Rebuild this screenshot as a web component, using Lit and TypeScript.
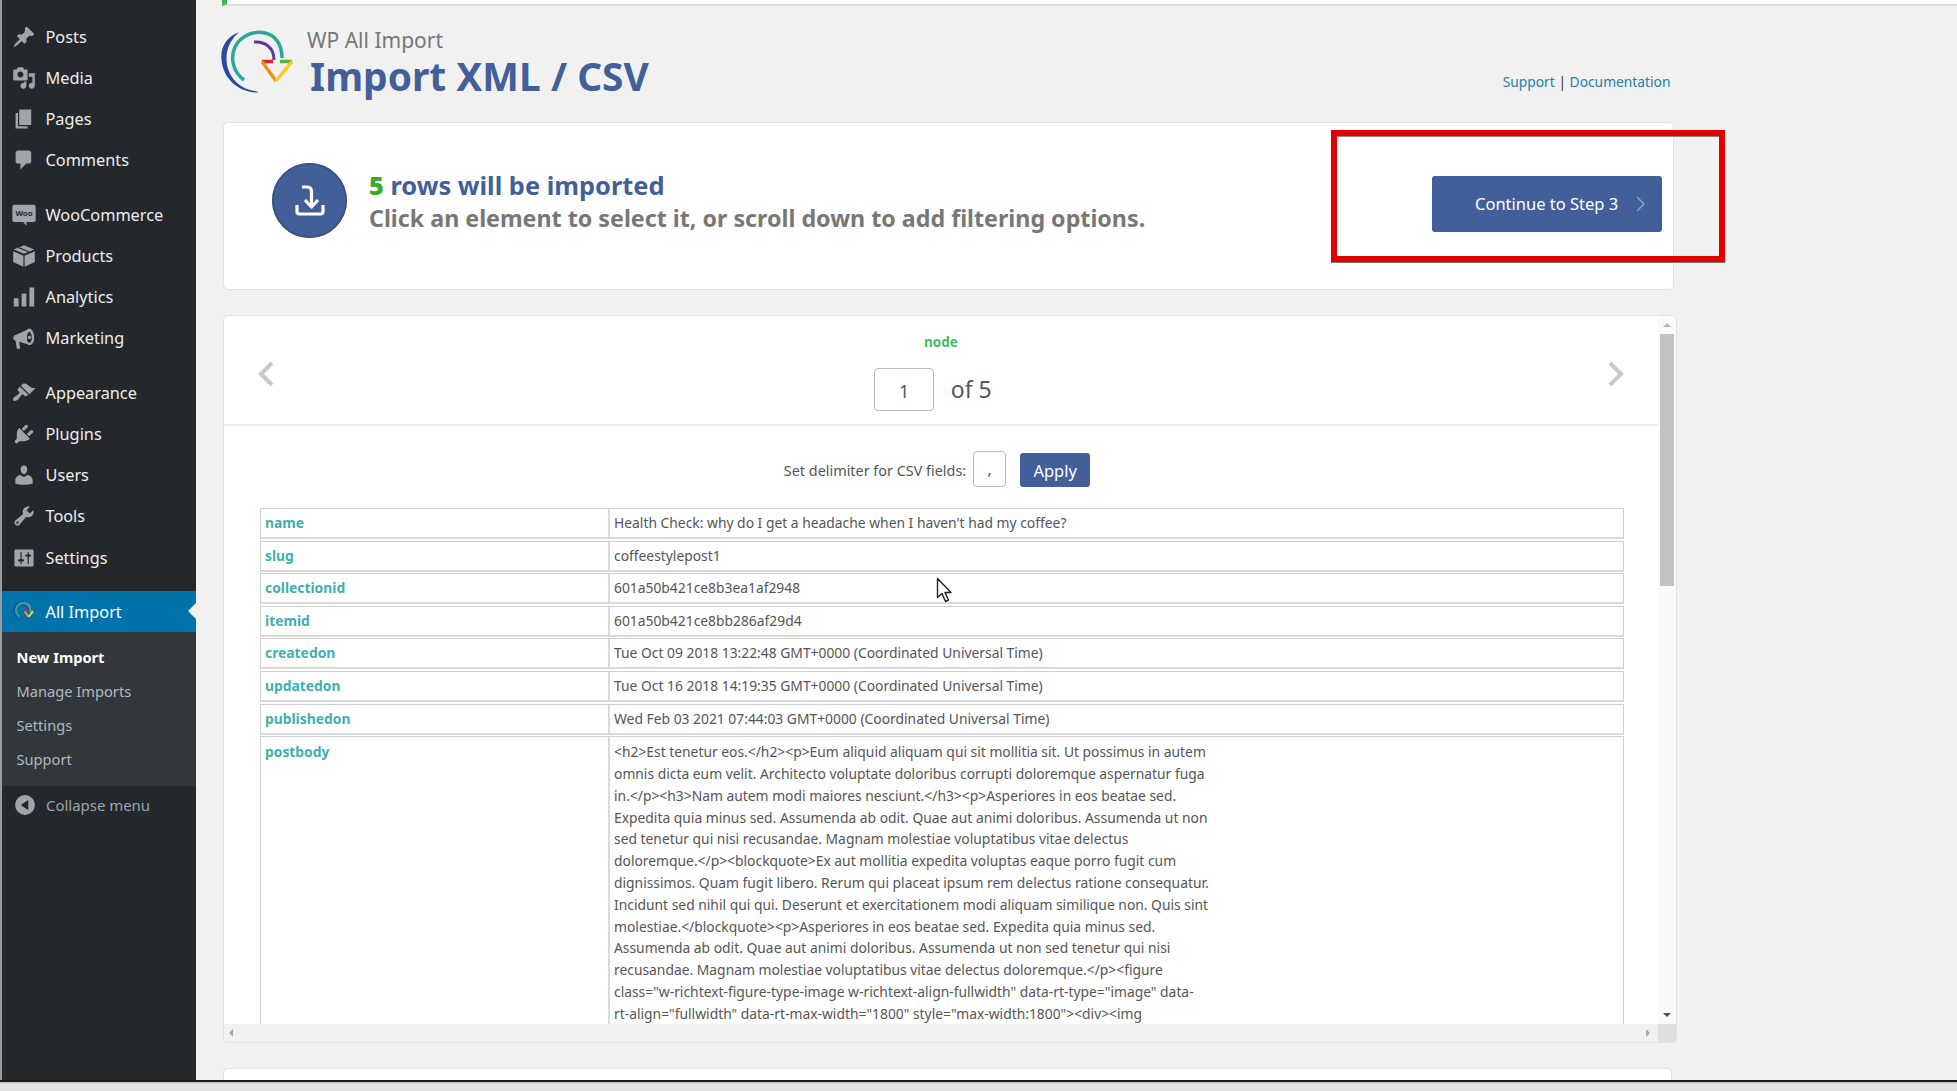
import { LitElement, html, css, svg } from "lit";
import { customElement } from "lit/decorators.js";

const ICONS: Record<string, unknown> = {
  pin: svg`<path d="M10.44 3.02l1.82-1.82 6.36 6.35-1.83 1.82c-1.05-.68-2.48-.57-3.41.36l-.75.75c-.92.93-1.04 2.35-.35 3.41l-1.83 1.82-2.41-2.41-2.8 2.79c-.42.42-3.38 2.71-3.8 2.29s1.86-3.39 2.28-3.81l2.79-2.79L4.1 9.36l1.83-1.82c1.05.69 2.48.57 3.4-.36l.75-.75c.93-.92 1.05-2.35.36-3.41z"/>`,
  media: svg`<path fill-rule="evenodd" d="M13 11V4c0-.55-.45-1-1-1h-1.67L9 1H5L3.67 3H2c-.55 0-1 .45-1 1v7c0 .55.45 1 1 1h10c.55 0 1-.45 1-1zM7 4.500c1.380 0 2.500 1.120 2.500 2.500S8.380 9.500 7 9.500 4.500 8.380 4.500 7 5.620 4.500 7 4.500zM14 6h5v10.500c0 1.380-1.120 2.500-2.500 2.500S14 17.880 14 16.500s1.120-2.500 2.500-2.500c.17 0 .34.02.5.05V9h-3V6zm-4 8.050V13h2v3.500c0 1.380-1.120 2.500-2.500 2.500S7 17.880 7 16.500 8.120 14 9.500 14c.17 0 .34.02.5.05z"/>`,
  page: svg`<path d="M6 15V2h10v13H6zm-1 1h8v2H3V5h2v11z"/>`,
  comment: svg`<path d="M5 2h9c1.100 0 2 .9 2 2v7c0 1.100-.9 2-2 2h-2l-5 5v-5H5c-1.100 0-2-.9-2-2V4c0-1.100.9-2 2-2z"/>`,
  woo: svg`<path d="M2 1.500h16c.9 0 1.700.8 1.700 1.700v11c0 .9-.8 1.700-1.700 1.700h-6l.4 3-3.200-3H2c-.9 0-1.700-.8-1.700-1.700v-11c0-.9.8-1.700 1.700-1.700z"/><text x="10" y="11.200" text-anchor="middle" font-size="6.500" font-weight="700" fill="#23282d" font-family="Noto Sans, sans-serif">Woo</text>`,
  box: svg`<path d="M10 1l8.500 3.500-8.500 3.700L1.500 4.500zM1 6l8.500 3.700V19L1 15zM19 6v9l-8.500 4V9.700z"/><path d="M5.500 3l8.500 3.500" stroke="#23282d" stroke-width="1" fill="none"/>`,
  bars: svg`<path d="M1.500 11h4v7h-4zM8 7h4v11H8zM14.500 2h4v16h-4z"/>`,
  mega: svg`<path fill-rule="evenodd" d="M18.500 10c0 3.400-1.800 6-4 6-.8 0-1.500-.3-2.100-.9L6 13.200 6.800 19H4l-1-6.800C1.700 11.800 1 11 1 10c0-1.300 1-2.200 2.500-2.700l9-4.200c.6-.7 1.300-1.100 2-1.100 2.200 0 4 3.600 4 8zm-4-5c-1.200 0-2 2.200-2 5s.8 4 2 4 2-1.800 2-4-.8-5-2-5z"/><circle cx="14.500" cy="9.500" r="1.400"/>`,
  brush: svg`<path d="M14.480 11.060L7.410 3.990l1.500-1.500c.5-.56 2.300-.47 3.510.32 1.210.8 1.430 1.280 2.910 2.100 1.180.64 2.450 1.260 4.450.85zm-.71.71L6.700 4.700 4.930 6.470c-.39.39-.39 1.020 0 1.410l1.060 1.060c.39.39.39 1.030 0 1.420-.6.6-1.430 1.110-2.210 1.690-.35.26-.7.53-1.010.84C1.430 13.230.5 15.070 1 16.500c1.430.5 3.270-.43 4.610-1.770.31-.31.58-.66.84-1.010.58-.78 1.090-1.610 1.690-2.210.39-.39 1.030-.39 1.420 0l1.060 1.060c.39.39 1.020.39 1.410 0z"/>`,
  plug: svg`<path d="M13.110 4.360L9.870 7.600 8 5.730l3.240-3.240c.35-.34 1.050-.2 1.560.32.52.51.66 1.210.31 1.550zm-8 1.770l.91-1.120 9.010 9.010-1.190.84c-.71.71-2.630 1.160-3.820 1.160H6.140L4.900 17.260c-.59.59-1.540.59-2.120 0-.59-.58-.59-1.530 0-2.120l1.240-1.240v-3.880c0-1.130.4-3.190 1.090-3.890zm7.260 3.970l3.240-3.240c.34-.35 1.040-.21 1.550.31.52.51.66 1.210.31 1.550l-3.240 3.250z"/>`,
  user: svg`<path d="M10 9.250c-2.270 0-2.730-3.440-2.730-3.440C7 4.020 7.820 2 9.970 2c2.160 0 2.980 2.020 2.710 3.810 0 0-.41 3.440-2.680 3.440zm0 2.570L12.720 10c2.390 0 4.520 2.330 4.520 4.530v2.490s-3.650 1.130-7.240 1.130c-3.650 0-7.240-1.130-7.240-1.130v-2.490c0-2.250 1.940-4.480 4.470-4.480z"/>`,
  wrench: svg`<path fill-rule="evenodd" d="M16.680 9.770c-1.340 1.340-3.300 1.670-4.950.99l-5.410 6.520c-.99.99-2.590.99-3.580 0s-.99-2.590 0-3.570l6.520-5.420c-.68-1.650-.35-3.610.99-4.950 1.280-1.280 3.120-1.620 4.720-1.060l-2.890 2.890 2.820 2.820 2.860-2.870c.53 1.580.18 3.390-1.080 4.650zM3.810 16.210c.4.39 1.040.39 1.430 0 .4-.4.4-1.040 0-1.430-.39-.4-1.030-.4-1.430 0-.39.39-.39 1.030 0 1.430z"/>`,
  sliders: svg`<path fill-rule="evenodd" d="M18 16V4c0-.55-.45-1-1-1H3c-.55 0-1 .45-1 1v12c0 .55.45 1 1 1h14c.55 0 1-.45 1-1zM8 11h1c.55 0 1 .45 1 1s-.45 1-1 1H8v1.500c0 .28-.22.5-.5.5s-.5-.22-.5-.5V13H6c-.55 0-1-.45-1-1s.45-1 1-1h1V5.500c0-.28.22-.5.5-.5s.5.22.5.5V11zm5-2h-1c-.55 0-1-.45-1-1s.45-1 1-1h1V5.500c0-.28.22-.5.5-.5s.5.22.5.5V7h1c.55 0 1 .45 1 1s-.45 1-1 1h-1v5.500c0 .28-.22.5-.5.5s-.5-.22-.5-.5V9z"/>`,
  collapse: svg`<path fill-rule="evenodd" d="M10 1a9 9 0 1 0 0 18 9 9 0 0 0 0-18zm3 4.500v9L6 10z"/>`,
};

const logo = (w: number, h: number, cls = "") => html`<svg class=${cls} width=${w} height=${h} viewBox="0 0 84 72" fill="none">
  <path d="M21 6C8 11 2 22 3.500 34 5 52 20 67 41 66.500 38 65 37 65 32 64 18 60 9 48 8.500 34 8 24 12 14 21 6z" fill="#2c4a9c"/>
  <path d="M26 54C15 46 12 32 17 21 23 9 36 4.500 47 7c10 2 17 11 17 25" stroke="#2aa99b" stroke-width="3.500"/>
  <path d="M36 16c10-1 20 5 20 18" stroke="#5a3a9e" stroke-width="3"/>
  <path d="M44 35.500h11" stroke="#d8262c" stroke-width="3.500"/>
  <path d="M62 35.500h12" stroke="#5cb53a" stroke-width="3.500"/>
  <path d="M44 35.500L58 55" stroke="#e8932a" stroke-width="3.500"/>
  <path d="M74 35.500L58 55" stroke="#f6cc1e" stroke-width="3.500"/>
</svg>`;

const GROUPS: { icon: string; label: string }[][] = [
  [
    { icon: "pin", label: "Posts" },
    { icon: "media", label: "Media" },
    { icon: "page", label: "Pages" },
    { icon: "comment", label: "Comments" },
  ],
  [
    { icon: "woo", label: "WooCommerce" },
    { icon: "box", label: "Products" },
    { icon: "bars", label: "Analytics" },
    { icon: "mega", label: "Marketing" },
  ],
  [
    { icon: "brush", label: "Appearance" },
    { icon: "plug", label: "Plugins" },
    { icon: "user", label: "Users" },
    { icon: "wrench", label: "Tools" },
    { icon: "sliders", label: "Settings" },
  ],
];

const ROWS = [
  ["name", "Health Check: why do I get a headache when I haven't had my coffee?"],
  ["slug", "coffeestylepost1"],
  ["collectionid", "601a50b421ce8b3ea1af2948"],
  ["itemid", "601a50b421ce8bb286af29d4"],
  ["createdon", "Tue Oct 09 2018 13:22:48 GMT+0000 (Coordinated Universal Time)"],
  ["updatedon", "Tue Oct 16 2018 14:19:35 GMT+0000 (Coordinated Universal Time)"],
  ["publishedon", "Wed Feb 03 2021 07:44:03 GMT+0000 (Coordinated Universal Time)"],
];

const BODY = [
  "<h2>Est tenetur eos.</h2><p>Eum aliquid aliquam qui sit mollitia sit. Ut possimus in autem",
  "omnis dicta eum velit. Architecto voluptate doloribus corrupti doloremque aspernatur fuga",
  "in.</p><h3>Nam autem modi maiores nesciunt.</h3><p>Asperiores in eos beatae sed.",
  "Expedita quia minus sed. Assumenda ab odit. Quae aut animi doloribus. Assumenda ut non",
  "sed tenetur qui nisi recusandae. Magnam molestiae voluptatibus vitae delectus",
  "doloremque.</p><blockquote>Ex aut mollitia expedita voluptas eaque porro fugit cum",
  "dignissimos. Quam fugit libero. Rerum qui placeat ipsum rem delectus ratione consequatur.",
  "Incidunt sed nihil qui qui. Deserunt et exercitationem modi aliquam similique non. Quis sint",
  "molestiae.</blockquote><p>Asperiores in eos beatae sed. Expedita quia minus sed.",
  "Assumenda ab odit. Quae aut animi doloribus. Assumenda ut non sed tenetur qui nisi",
  "recusandae. Magnam molestiae voluptatibus vitae delectus doloremque.</p><figure",
  'class="w-richtext-figure-type-image w-richtext-align-fullwidth" data-rt-type="image" data-',
  'rt-align="fullwidth" data-rt-max-width="1800" style="max-width:1800"><div><img',
];

@customElement("app-root")
export class AppRoot extends LitElement {
  static styles = css`
    :host {
      display: block;
      position: relative;
      width: 1957px;
      height: 1091px;
      overflow: hidden;
      background: #f1f1f1;
      font-family: "Noto Sans", "Open Sans", sans-serif;
      color: #555;
    }
    .page { display: flex; height: 1080px; overflow: hidden; }
    .edge { width: 2px; background: #9c9c9c; flex: none; }
    .bottom {
      height: 11px;
      box-sizing: border-box;
      border-top: 2px solid #1c1c1c;
      background: linear-gradient(#b4b4b4 0, #e2e2e2 2px);
    }
    .side {
      width: 194px;
      flex: none;
      background: #23282d;
      padding-top: 16px;
      box-sizing: border-box;
    }
    .group { margin-bottom: 13px; }
    .item {
      height: 41.25px;
      display: flex;
      align-items: center;
      color: #eeeeee;
      font-size: 16.3px;
      position: relative;
    }
    .ico { width: 24px; height: 24px; margin-left: 10px; margin-right: 9.5px; fill: #a0a5aa; flex: none; }
    .active { background: #0073aa; color: #fff; height: 41px; }
    .active::after {
      content: "";
      position: absolute;
      right: 0;
      top: 12px;
      border: 8px solid transparent;
      border-right-color: #f1f1f1;
      border-left: none;
    }
    .mini-slot { display: flex; width: 24px; height: 21px; margin-left: 10px; margin-right: 9.5px; }
    .mini path { stroke-width: 7; }
    .subs { background: #32373c; padding: 8px 0 10px; }
    .sub {
      height: 34px;
      display: flex;
      align-items: center;
      padding-left: 14.5px;
      font-size: 14.65px;
      color: #b4b9be;
    }
    .sub.cur { color: #fff; font-weight: 700; }
    .collapse { height: 36px; margin-top: 1px; display: flex; align-items: center; color: #a0a5aa; font-size: 14.95px; }
    .collapse .ico { width: 22px; height: 22px; margin-left: 12px; margin-right: 10px; }

    .main { flex: 1; min-width: 0; }
    .notice {
      height: 6px;
      box-sizing: border-box;
      margin-left: 26px;
      background: #fff;
      border-left: 5px solid #46b450;
      border-bottom: 2px solid #dcdcdc;
    }
    .wrap { width: 1454px; margin-left: 27px; }
    .head { height: 115.5px; display: flex; box-sizing: border-box; padding-top: 20px; position: relative; }
    .logo { margin-left: -5px; flex: none; display: block; }
    .titles { margin-left: 5px; }
    .brand { font-size: 21px; line-height: 28px; color: #777; margin-top: 0; margin-left: 0; }
    .title { font-size: 38.9px; line-height: 46px; font-weight: 700; color: #425f9a; margin-left: 3px; margin-top: -1.5px; }
    .links { margin-left: auto; margin-right: 6.5px; margin-top: 46px; font-size: 13.8px; color: #333; }
    .links a { color: #1f7fa8; text-decoration: none; }
    .card {
      background: #fff;
      border: 1px solid #e2e2e2;
      border-radius: 5px;
      box-sizing: border-box;
    }
    .summary {
      width: 1451px;
      height: 168px;
      display: flex;
      align-items: center;
      padding: 0 11px 0 48px;
    }
    .disc {
      width: 75px;
      height: 75px;
      border-radius: 50%;
      background: #425f9a;
      box-shadow: inset 0 0 0 2px #3a5488;
      display: flex;
      align-items: center;
      justify-content: center;
      flex: none;
      margin-top: -10px;
    }
    .msg { margin-left: 22px; margin-top: -8px; }
    .msg1 { font-size: 25.4px; line-height: 33px; font-weight: 700; color: #425f9a; }
    .msg1 b { color: #3fa928; }
    .msg2 { font-size: 23.24px; line-height: 33px; font-weight: 700; color: #777; }
    .cont {
      margin-left: auto;
      margin-top: -4px;
      width: 230px;
      height: 56px;
      border: none;
      border-radius: 3px;
      background: #425f9a;
      color: #fff;
      font: inherit;
      font-size: 16.5px;
      display: flex;
      align-items: center;
      padding-left: 43px;
      box-sizing: border-box;
    }
    .cont svg { margin-left: 18px; }

    .viewer {
      margin-top: 25.5px;
      height: 728px;
      display: grid;
      grid-template-columns: 1fr 18px;
      grid-template-rows: 1fr 18px;
      overflow: hidden;
    }
    .scroll { overflow: hidden; min-width: 0; min-height: 0; }
    .pager {
      height: 110px;
      box-sizing: border-box;
      border-bottom: 2px solid #ececec;
      display: flex;
      justify-content: space-between;
      align-items: center;
      padding: 7px 34px 0;
    }
    .center { display: flex; flex-direction: column; align-items: center; padding-top: 6px; margin-top: -11px; }
    .node { font-size: 13.5px; font-weight: 700; color: #46ba69; line-height: 20px; }
    .of { display: flex; align-items: center; gap: 16.5px; margin-top: 16px; margin-right: 16px; font-size: 23px; color: #555; }
    .box {
      border: 1px solid #bbb;
      border-radius: 4px;
      display: flex;
      align-items: center;
      justify-content: center;
      box-sizing: border-box;
      background: #fff;
    }
    .page-no { width: 60px; height: 43px; font-size: 18px; padding-top: 4px; }
    .delim {
      height: 82px;
      box-sizing: border-box;
      display: flex;
      justify-content: center;
      align-items: flex-start;
      padding-top: 25px;
      padding-right: 8px;
      font-size: 14.4px;
    }
    .delim span { margin-top: 10px; }
    .comma { width: 33px; height: 36px; margin-left: 7px; font-size: 16px; }
    .apply {
      width: 70px;
      height: 34px;
      margin-left: 14px;
      margin-top: 2px;
      background: #425f9a;
      color: #fff;
      border-radius: 3px;
      display: flex;
      align-items: center;
      justify-content: center;
      font-size: 16.5px;
    }
    .table { margin: 0 34px 0 36px; display: flex; flex-direction: column; gap: 1.6px; font-size: 13.85px; }
    .row {
      display: grid;
      grid-template-columns: 347px 1fr;
      border: 1px solid #cfcfcf;
      border-bottom: 2px solid #dadada;
      box-sizing: border-box;
      height: 31px;
    }
    .row.tall { height: auto; padding-bottom: 60px; }
    .k { font-weight: 700; color: #3fb0ae; padding: 0 4px; line-height: 28px; }
    .v { border-left: 2px solid #dadada; padding: 0 4px; line-height: 28px; white-space: nowrap; }
    .tall .k { line-height: 30px; }
    .tall .v { line-height: 21.8px; padding-top: 4px; margin-bottom: -60px; padding-bottom: 60px; }
    .line { white-space: nowrap; }

    .vbar { background: #fafafa; display: flex; flex-direction: column; align-items: center; justify-content: space-between; padding: 7px 0 7px; box-sizing: border-box; }
    .thumb { width: 14px; height: 252px; background: #c1c1c1; margin-top: 7px; margin-bottom: auto; }
    .up { width: 0; height: 0; border: 4.5px solid transparent; border-bottom-color: #b5b5b5; border-top: none; }
    .down { width: 0; height: 0; border: 4.5px solid transparent; border-top-color: #505050; border-bottom: none; }
    .hbar { background: #f1f1f1; display: flex; align-items: center; justify-content: space-between; padding: 0 8px 0 5px; }
    .left { width: 0; height: 0; border: 4.5px solid transparent; border-right-color: #a8a8a8; border-left: none; }
    .right { width: 0; height: 0; border: 4.5px solid transparent; border-left-color: #a8a8a8; border-right: none; }
    .corner { background: #dedede; }
    .next { width: 1449px; height: 30px; margin-top: 25px; }

    .red {
      position: absolute;
      left: 1331px;
      top: 130px;
      width: 394px;
      height: 132px;
      box-sizing: border-box;
      border: 6px solid #e30000;
      box-shadow: 0 1px 0 #777, inset 0 1px 0 #888;
      pointer-events: none;
    }
    .cursor { position: absolute; left: 936px; top: 577px; }
  `;

  private icon(name: string) {
    return html`<svg class="ico" viewBox="0 0 20 20">${ICONS[name]}</svg>`;
  }

  render() {
    return html`
      <div class="page">
        <div class="edge"></div>
        <nav class="side">
          ${GROUPS.map(
            (g) => html`<div class="group">
              ${g.map((i) => html`<div class="item">${this.icon(i.icon)}<span>${i.label}</span></div>`)}
            </div>`
          )}
          <div class="item active">
            <span class="mini-slot">${logo(24, 21, "mini")}</span>
            <span>All Import</span>
          </div>
          <div class="subs">
            <div class="sub cur">New Import</div>
            <div class="sub">Manage Imports</div>
            <div class="sub">Settings</div>
            <div class="sub">Support</div>
          </div>
          <div class="collapse">${this.icon("collapse")}<span>Collapse menu</span></div>
        </nav>
        <main class="main">
          <div class="notice"></div>
          <div class="wrap">
            <header class="head">
              <div class="logo">${logo(84, 72)}</div>
              <div class="titles">
                <div class="brand">WP All Import</div>
                <div class="title">Import XML / CSV</div>
              </div>
              <div class="links"><a>Support</a> | <a>Documentation</a></div>
            </header>
            <section class="card summary">
              <div class="disc">
                <svg width="30" height="32" viewBox="0 0 30 32" fill="none" stroke="#fff" stroke-width="3.2">
                  <path d="M7 2h5c3 0 4.500 2 4.500 4.500V20"/>
                  <path d="M10 15l6.500 7 6.500-7" stroke-linejoin="round"/>
                  <path d="M2 20v6.500c0 1.500 1 2.500 2.500 2.500h21c1.500 0 2.500-1 2.500-2.500V20"/>
                </svg>
              </div>
              <div class="msg">
                <div class="msg1"><b>5</b> rows will be imported</div>
                <div class="msg2">Click an element to select it, or scroll down to add filtering options.</div>
              </div>
              <div class="cont">
                Continue to Step 3
                <svg width="9" height="16" viewBox="0 0 9 16" fill="none" stroke="#8fa1c6" stroke-width="1.5"><path d="M1 1l7 7-7 7"/></svg>
              </div>
            </section>
            <section class="card viewer">
              <div class="scroll">
                <div class="pager">
                  <svg width="16" height="26" viewBox="0 0 16 26" fill="none" stroke="#c8c8c8" stroke-width="4"><path d="M14 2L3 13l11 11"/></svg>
                  <div class="center">
                    <div class="node">node</div>
                    <div class="of"><div class="box page-no">1</div><span>of 5</span></div>
                  </div>
                  <svg width="16" height="26" viewBox="0 0 16 26" fill="none" stroke="#c8c8c8" stroke-width="4"><path d="M2 2l11 11L2 24"/></svg>
                </div>
                <div class="delim">
                  <span>Set delimiter for CSV fields:</span>
                  <div class="box comma">,</div>
                  <div class="apply">Apply</div>
                </div>
                <div class="table">
                  ${ROWS.map(
                    ([k, v]) => html`<div class="row"><div class="k">${k}</div><div class="v">${v}</div></div>`
                  )}
                  <div class="row tall">
                    <div class="k">postbody</div>
                    <div class="v">${BODY.map((l) => html`<div class="line">${l}</div>`)}</div>
                  </div>
                </div>
              </div>
              <div class="vbar"><div class="up"></div><div class="thumb"></div><div class="down"></div></div>
              <div class="hbar"><div class="left"></div><div class="right"></div></div>
              <div class="corner"></div>
            </section>
            <section class="card next"></section>
          </div>
        </main>
      </div>
      <div class="bottom"></div>
      <div class="red"></div>
      <svg class="cursor" width="16" height="26" viewBox="0 0 16 26">
        <path d="M1.500 1.500v19l4.500-4 3.500 8 3-1.300-3.500-7.700h6z" fill="#fff" stroke="#222" stroke-width="1.4" stroke-linejoin="round"/>
      </svg>
    `;
  }
}
